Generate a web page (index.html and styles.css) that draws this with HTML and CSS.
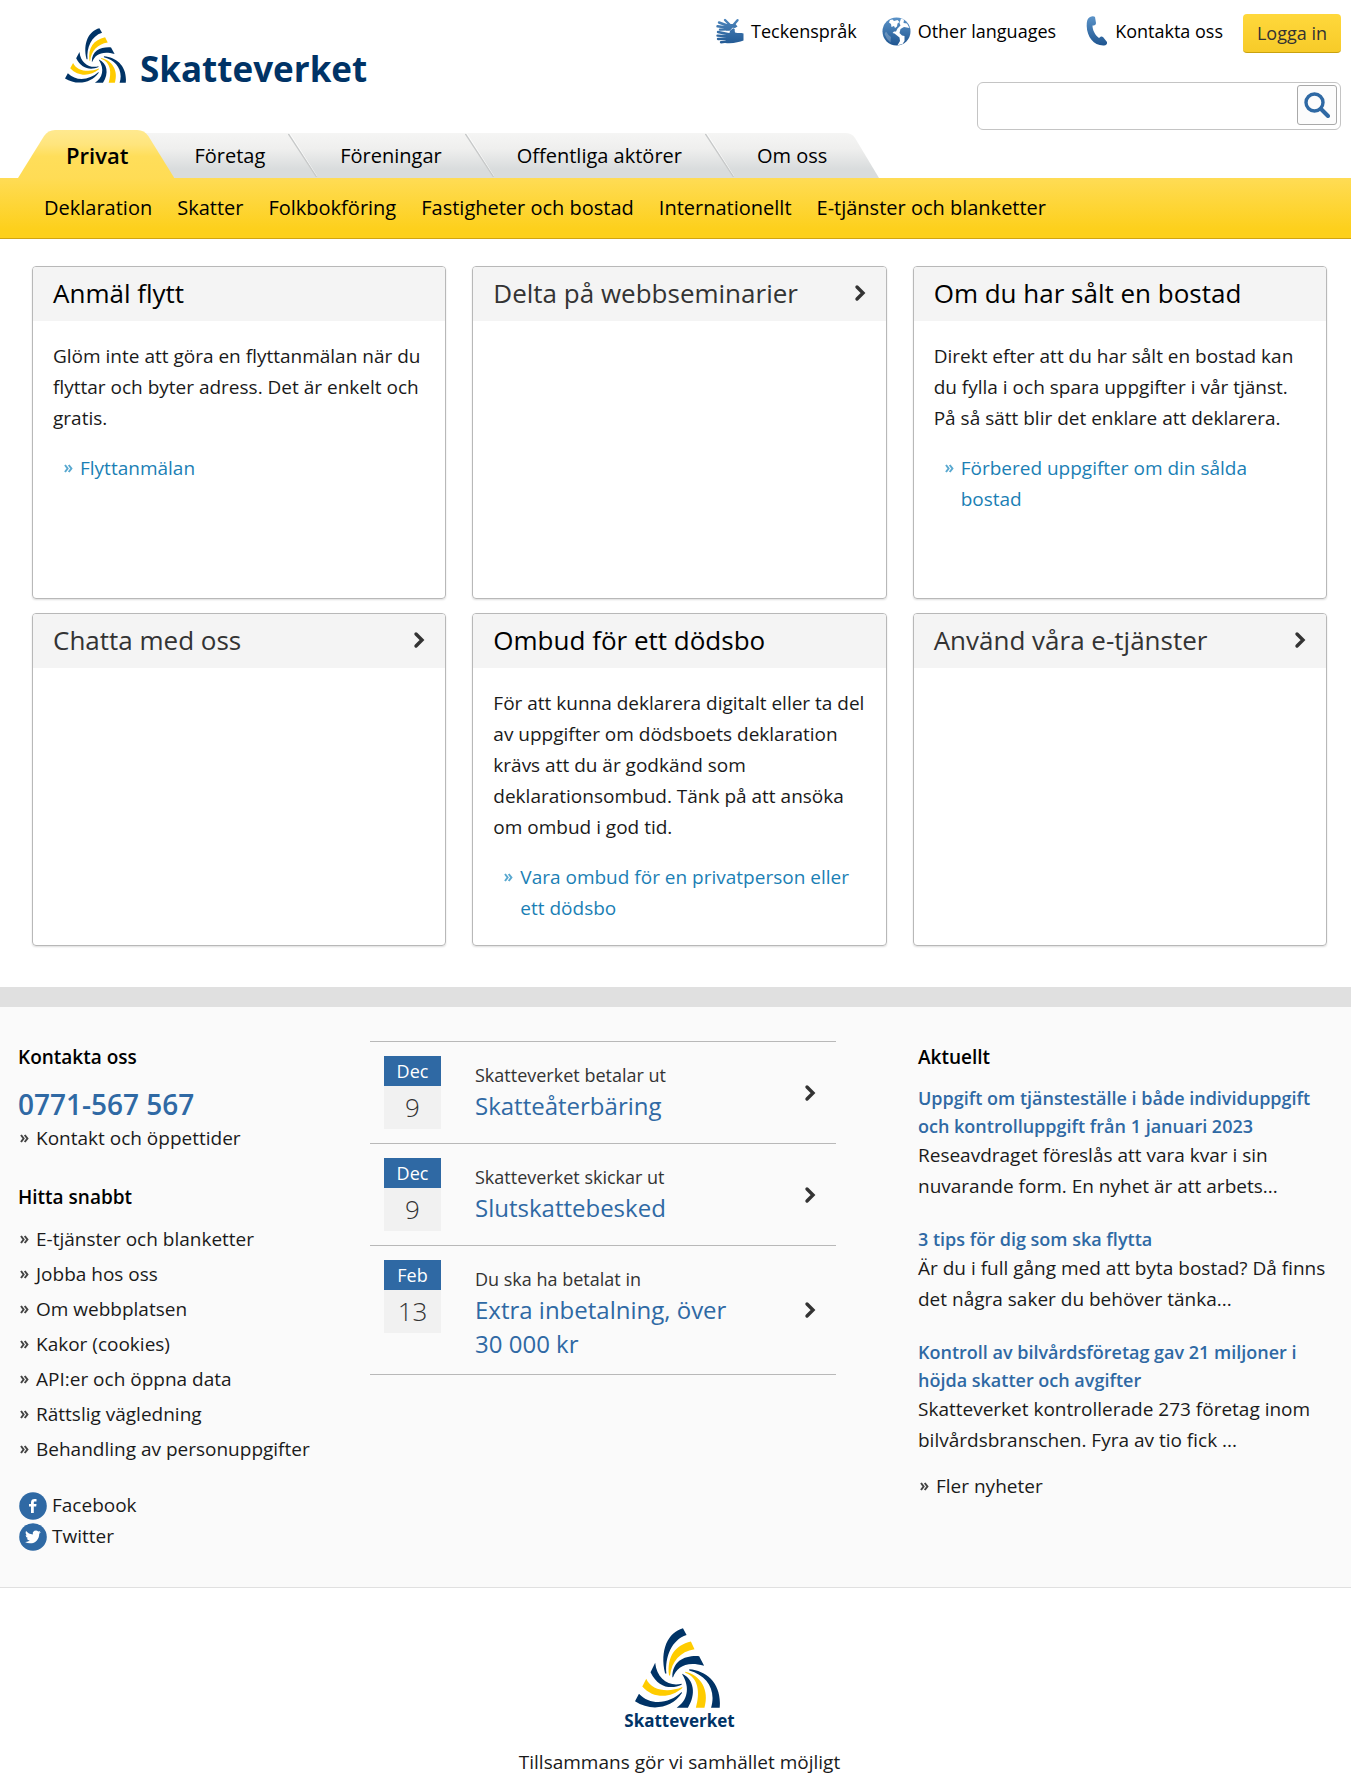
FILE: index.html
```html
<!DOCTYPE html>
<html lang="sv">
<head>
<meta charset="utf-8">
<meta name="viewport" content="width=device-width, initial-scale=1">
<title>Skatteverket – Privat</title>
<link rel="stylesheet" href="styles.css">
</head>
<body>
<svg class="defs" width="0" height="0" aria-hidden="true">
  <defs>
    <linearGradient id="blue" x1="0" y1="0" x2="0" y2="1"><stop offset="0" stop-color="#5b93c8"/><stop offset="1" stop-color="#1f5590"/></linearGradient>
    <linearGradient id="handBlue" gradientUnits="userSpaceOnUse" x1="0" y1="0" x2="0" y2="26"><stop offset="0" stop-color="#4d86bd"/><stop offset="1" stop-color="#235a94"/></linearGradient>
    <linearGradient id="tabYellow" x1="0" y1="0" x2="0" y2="1"><stop offset="0" stop-color="#ffe98f"/><stop offset=".3" stop-color="#ffe57d"/><stop offset=".55" stop-color="#ffde5a"/><stop offset="1" stop-color="#ffdc55"/></linearGradient>
    <linearGradient id="tabGray" x1="0" y1="0" x2="0" y2="1"><stop offset="0" stop-color="#f5f5f4"/><stop offset=".35" stop-color="#efefee"/><stop offset=".8" stop-color="#d9dcdd"/><stop offset="1" stop-color="#d9dcdd"/></linearGradient>
    <symbol id="swirl" viewBox="404 113 257 241" preserveAspectRatio="none">
      <g fill="#003366">
        <path d="M549 114C504 126 478 180 495 250L499 250C494 200 515 148 560 134Z"/>
        <path d="M598 198C555 195 517 212 517 261L519 261C530 230 560 211 613 227Z"/>
        <path d="M568 237C622 241 667 282 660 353L634 353C650 300 622 256 568 241Z"/>
        <path d="M547 251C582 268 590 312 564 353L530 353C562 332 572 294 547 253Z"/>
        <path d="M465 218L451 246C473 292 512 299 545 284L545 281C508 291 470 268 465 218Z"/>
        <path d="M416 311L404 334C452 365 515 356 546 309L545 306C508 341 452 349 416 311Z"/>
      </g>
      <g fill="#ffcc00">
        <path d="M573 154C525 165 500 200 507 256L510 256C515 214 540 184 584 177Z"/>
        <path d="M556 245C602 255 630 300 614 353L588 353C601 310 597 262 556 248Z"/>
        <path d="M438 266L426 289C460 327 512 325 547 294L547 291C505 309 453 302 438 266Z"/>
      </g>
    </symbol>
    <symbol id="chevron" viewBox="0 0 12 18"><path d="M3 3L9 9L3 15" fill="none" stroke="#333" stroke-width="3.400" stroke-linecap="round"/></symbol>
    <symbol id="divider" viewBox="0 0 29 45"><path d="M1.5 0L30 45" stroke="#fff" stroke-opacity=".7" stroke-width="1"/><path d="M.5 1L28.5 44" stroke="#c6c8c8" stroke-width="1.3"/></symbol>
    <symbol id="raquo" viewBox="0 0 9 9"><path d="M1 1L3.600 4.500L1 8M4.700 1L7.400 4.500L4.700 8" fill="none" stroke="currentColor" stroke-width="2"/></symbol>
  </defs>
</svg>

<header class="header">
  <div class="masthead">
    <a class="logo" href="#"><svg class="logo-mark" aria-hidden="true"><use href="#swirl"/></svg><span class="logo-name">Skatteverket</span></a>
    <div class="tools">
      <nav class="quick" aria-label="Verktyg">
        <a class="quick-link" href="#"><svg width="28" height="26" viewBox="0 0 28 26" aria-hidden="true">
          <g fill="none" stroke="url(#handBlue)" stroke-width="2.400" stroke-linecap="round" stroke-linejoin="round"><path d="M15 8L9 2M14 8.500L3 4.500M14 10L1.500 8.300M13 11.300L4 11.600M16.500 8L21.500 2.200M15 13.500L17.500 11.500"/><path d="M14 16.500L2 14M14 18.500L1.500 17.600M14 20.500L2 21M14 23L5 24.200"/></g>
          <path d="M11 6L19.500 6L21.500 8.500L19 10L16.500 9.800L14 12.500H10Z" fill="url(#handBlue)"/>
          <path d="M12 15.500L17 12.500L18.500 11.500L19 14.500C22 15.500 25 14.500 27.500 15.500V22.500C23 24 17 26 9 25L11 18Z" fill="url(#handBlue)"/></svg><span>Teckenspråk</span></a>
        <a class="quick-link" href="#"><svg width="29" height="29" viewBox="0 0 29 29" aria-hidden="true"><circle cx="14.500" cy="14.500" r="14" fill="url(#blue)"/><path d="M8 3L10.500 2.500L12 4L15.500 3L17.500 5L15.500 6.500L15 9.500L13 11L12 9L9.500 10L9 7L7 5.500Z" fill="#fff"/><path d="M19 1.500L22 2.800L21.500 6L25 6.500L27.500 11L22 10L18.500 12L17.500 16L20 18.500L22.500 19L22.500 24L20.500 27L15.500 28.300L18 24L17.500 20.500L12.500 16.500L10.500 16L12 14.500L14 14.500L15.500 11.500L18.500 8.500L17.500 6Z" fill="#fff"/><path d="M4 14.500L6.500 18L9 20L8.500 25.500L5 22L2.500 17Z" fill="#fff" fill-opacity=".25"/></svg><span>Other languages</span></a>
        <a class="quick-link quick-phone" href="#"><svg width="22" height="30" viewBox="0 0 22 30" aria-hidden="true"><path d="M4 1C6 0 8 0 9 1L10 7C10 9 8.500 9.500 6.500 9.500C6.500 14 9 19 13 22C14.500 20.500 15.500 20 17 21L21 26C21.500 28 20 29.500 18 29.500C8 30 1 21 .7 10C.6 5 1.500 2 4 1Z" fill="url(#blue)"/></svg><span>Kontakta oss</span></a>
        <button class="login" type="button">Logga in</button>
      </nav>
      <form class="search" role="search">
        <input class="search-input" type="search" aria-label="Sök">
        <button class="search-button" type="button" aria-label="Sök"><svg width="26" height="26" viewBox="0 0 26 26" fill="none" stroke="#2f69a4" aria-hidden="true"><circle cx="10.500" cy="10.500" r="8.500" stroke-width="3.400"/><path d="M17 17L24 24" stroke-width="4" stroke-linecap="round"/></svg></button>
      </form>
    </div>
  </div>
  <nav aria-label="Huvudmeny">
    <ul class="tabs">
      <li class="tab tab-active"><svg class="tab-shape" viewBox="0 0 156 48" preserveAspectRatio="none" aria-hidden="true"><path d="M0 48L26 6Q30 0 37 0H119Q126 0 130 6L156 48Z" fill="url(#tabYellow)"/></svg><a href="#">Privat</a></li>
      <li class="tab tab-first"><a href="#">Företag</a></li>
      <li class="tab-edge"><svg width="29" height="45" aria-hidden="true"><use href="#divider"/></svg></li>
      <li class="tab"><a href="#">Föreningar</a></li>
      <li class="tab-edge"><svg width="29" height="45" aria-hidden="true"><use href="#divider"/></svg></li>
      <li class="tab"><a href="#">Offentliga aktörer</a></li>
      <li class="tab-edge"><svg width="29" height="45" aria-hidden="true"><use href="#divider"/></svg></li>
      <li class="tab tab-last"><a href="#">Om oss</a></li>
      <li class="tab-end"><svg width="34" height="45" viewBox="0 0 34 45" aria-hidden="true"><path d="M0 0Q7 0 10 5L34 45H0Z" fill="url(#tabGray)"/></svg></li>
    </ul>
    <ul class="subnav">
      <li><a href="#">Deklaration</a></li>
      <li><a href="#">Skatter</a></li>
      <li><a href="#">Folkbokföring</a></li>
      <li><a href="#">Fastigheter och bostad</a></li>
      <li><a href="#">Internationellt</a></li>
      <li><a href="#">E-tjänster och blanketter</a></li>
    </ul>
  </nav>
</header>

<main class="cards">
  <section class="card">
    <h2 class="card-title">Anmäl flytt</h2>
    <div class="card-body">
      <p>Glöm inte att göra en flyttanmälan när du flyttar och byter adress. Det är enkelt och gratis.</p>
      <a class="card-link" href="#"><svg class="raquo" aria-hidden="true"><use href="#raquo"/></svg><span>Flyttanmälan</span></a>
    </div>
  </section>
  <section class="card">
    <h2 class="card-title"><a class="card-head-link" href="#">Delta på webbseminarier <svg class="chevron" aria-hidden="true"><use href="#chevron"/></svg></a></h2>
  </section>
  <section class="card">
    <h2 class="card-title">Om du har sålt en bostad</h2>
    <div class="card-body">
      <p>Direkt efter att du har sålt en bostad kan du fylla i och spara uppgifter i vår tjänst. På så sätt blir det enklare att deklarera.</p>
      <a class="card-link" href="#"><svg class="raquo" aria-hidden="true"><use href="#raquo"/></svg><span>Förbered uppgifter om din sålda bostad</span></a>
    </div>
  </section>
  <section class="card">
    <h2 class="card-title"><a class="card-head-link" href="#">Chatta med oss <svg class="chevron" aria-hidden="true"><use href="#chevron"/></svg></a></h2>
  </section>
  <section class="card">
    <h2 class="card-title">Ombud för ett dödsbo</h2>
    <div class="card-body">
      <p>För att kunna deklarera digitalt eller ta del av uppgifter om dödsboets deklaration krävs att du är godkänd som deklarationsombud. Tänk på att ansöka om ombud i god tid.</p>
      <a class="card-link" href="#"><svg class="raquo" aria-hidden="true"><use href="#raquo"/></svg><span>Vara ombud för en privatperson eller ett dödsbo</span></a>
    </div>
  </section>
  <section class="card">
    <h2 class="card-title"><a class="card-head-link" href="#">Använd våra e-tjänster <svg class="chevron" aria-hidden="true"><use href="#chevron"/></svg></a></h2>
  </section>
</main>

<footer>
  <div class="info">
    <div class="info-left">
      <h2 class="info-title">Kontakta oss</h2>
      <a class="phone" href="#">0771-567 567</a>
      <a class="arrow-link" href="#"><svg class="raquo" aria-hidden="true"><use href="#raquo"/></svg>Kontakt och öppettider</a>
      <h2 class="info-title info-title-next">Hitta snabbt</h2>
      <ul class="links">
        <li><a class="arrow-link" href="#"><svg class="raquo" aria-hidden="true"><use href="#raquo"/></svg>E-tjänster och blanketter</a></li>
        <li><a class="arrow-link" href="#"><svg class="raquo" aria-hidden="true"><use href="#raquo"/></svg>Jobba hos oss</a></li>
        <li><a class="arrow-link" href="#"><svg class="raquo" aria-hidden="true"><use href="#raquo"/></svg>Om webbplatsen</a></li>
        <li><a class="arrow-link" href="#"><svg class="raquo" aria-hidden="true"><use href="#raquo"/></svg>Kakor (cookies)</a></li>
        <li><a class="arrow-link" href="#"><svg class="raquo" aria-hidden="true"><use href="#raquo"/></svg>API:er och öppna data</a></li>
        <li><a class="arrow-link" href="#"><svg class="raquo" aria-hidden="true"><use href="#raquo"/></svg>Rättslig vägledning</a></li>
        <li><a class="arrow-link" href="#"><svg class="raquo" aria-hidden="true"><use href="#raquo"/></svg>Behandling av personuppgifter</a></li>
      </ul>
      <ul class="social">
        <li><a href="#"><svg width="28" height="28" viewBox="0 0 28 28" aria-hidden="true"><circle cx="14" cy="14" r="13.800" fill="#2f69a4"/><path d="M12 21V14.500H10V12H12V10.500C12 8 13.300 7 15.500 7H17.500V9.500H16C15 9.500 14.800 10 14.800 10.800V12H17.500L17.200 14.500H14.800V21Z" fill="#fff"/></svg>Facebook</a></li>
        <li><a href="#"><svg width="28" height="28" viewBox="0 0 28 28" aria-hidden="true"><circle cx="14" cy="14" r="13.800" fill="#2f69a4"/><g transform="translate(6 6) scale(.66)"><path d="M23.950 4.570a10 10 0 0 1-2.820.770 4.960 4.960 0 0 0 2.160-2.720c-.950.550-2 .950-3.130 1.180a4.920 4.920 0 0 0-8.380 4.480C7.690 8.090 4.070 6.130 1.640 3.160a4.820 4.820 0 0 0-.670 2.480c0 1.710.870 3.210 2.190 4.100a4.900 4.900 0 0 1-2.230-.620v.060a4.920 4.920 0 0 0 3.950 4.830 5 5 0 0 1-2.210.080 4.940 4.940 0 0 0 4.600 3.420A9.870 9.870 0 0 1 0 19.540a13.990 13.990 0 0 0 7.550 2.210c9.050 0 13.990-7.500 13.990-13.980 0-.210 0-.420-.010-.630a9.940 9.940 0 0 0 2.420-2.570z" fill="#fff"/></g></svg>Twitter</a></li>
      </ul>
    </div>

    <ul class="dates">
      <li><a class="date-item" href="#">
        <span class="date"><span class="month">Dec</span><span class="day">9</span></span>
        <span class="date-text"><span class="date-intro">Skatteverket betalar ut</span><span class="date-name">Skatteåterbäring</span></span>
        <svg class="chevron" aria-hidden="true"><use href="#chevron"/></svg>
      </a></li>
      <li><a class="date-item" href="#">
        <span class="date"><span class="month">Dec</span><span class="day">9</span></span>
        <span class="date-text"><span class="date-intro">Skatteverket skickar ut</span><span class="date-name">Slutskattebesked</span></span>
        <svg class="chevron" aria-hidden="true"><use href="#chevron"/></svg>
      </a></li>
      <li><a class="date-item" href="#">
        <span class="date"><span class="month">Feb</span><span class="day">13</span></span>
        <span class="date-text"><span class="date-intro">Du ska ha betalat in</span><span class="date-name">Extra inbetalning, över 30&nbsp;000&nbsp;kr</span></span>
        <svg class="chevron" aria-hidden="true"><use href="#chevron"/></svg>
      </a></li>
    </ul>

    <div class="news">
      <h2 class="info-title">Aktuellt</h2>
      <article class="news-item"><h3><a href="#">Uppgift om tjänsteställe i både individuppgift och kontrolluppgift från 1 januari 2023</a></h3><p>Reseavdraget föreslås att vara kvar i sin nuvarande form. En nyhet är att arbets...</p></article>
      <article class="news-item"><h3><a href="#">3 tips för dig som ska flytta</a></h3><p>Är du i full gång med att byta bostad? Då finns det några saker du behöver tänka...</p></article>
      <article class="news-item"><h3><a href="#">Kontroll av bilvårdsföretag gav 21 miljoner i höjda skatter och avgifter</a></h3><p>Skatteverket kontrollerade 273 företag inom bilvårdsbranschen. Fyra av tio fick ...</p></article>
      <a class="arrow-link" href="#"><svg class="raquo" aria-hidden="true"><use href="#raquo"/></svg>Fler nyheter</a>
    </div>
  </div>
  <div class="closing">
    <svg class="closing-mark" aria-hidden="true"><use href="#swirl"/></svg>
    <span class="closing-name">Skatteverket</span>
    <p class="tagline">Tillsammans gör vi samhället möjligt</p>
  </div>
</footer>
</body>
</html>
```
FILE: styles.css
```css
* { box-sizing: border-box; }
body {
  margin: 0;
  background: #fff;
  color: #1a1a1a;
  font: 19px/31px "Open Sans", "Noto Sans", sans-serif;
}
h2, h3, p, ul { margin: 0; padding: 0; font-weight: 400; }
ul { list-style: none; }
a { color: inherit; text-decoration: none; }
svg { display: block; flex: none; }
button { font: inherit; cursor: pointer; }
.defs { position: absolute; }

/* Header */
.masthead {
  display: flex;
  justify-content: space-between;
  align-items: flex-start;
  padding: 14px 10px 0 65px;
}
.logo { display: flex; align-items: flex-end; gap: 14px; padding-top: 14px; color: #003366; }
.logo-mark { width: 61px; height: 55px; }
.logo-name { font-size: 35px; line-height: 28px; font-weight: 700; }
.tools { display: flex; flex-direction: column; align-items: flex-end; gap: 29px; }
.quick { display: flex; align-items: flex-start; color: #000; font-size: 18px; }
.quick-link { display: flex; align-items: center; gap: 7px; height: 34px; margin-right: 25px; }
.quick-phone { margin: 0 20px 0 5px; }
.login {
  height: 39px;
  padding: 0 14px;
  border: 0;
  border-bottom: 1px solid #c9a20e;
  border-radius: 4px;
  background: linear-gradient(#ffd83c, #f7cb29);
  color: #333;
}
.search {
  display: flex;
  width: 364px;
  height: 48px;
  padding: 2px 3px;
  border: 1px solid #c4c4c4;
  border-radius: 6px;
}
.search-input { flex: 1; min-width: 0; border: 0; outline: 0; background: none; font: inherit; }
.search-button {
  display: flex;
  align-items: center;
  justify-content: center;
  width: 40px;
  height: 40px;
  padding: 0;
  border: 1px solid #a9a9a9;
  border-radius: 3px;
  background: #fcfcfc;
}

.tabs { display: flex; align-items: flex-end; padding-left: 18px; font-size: 20px; color: #000; }
.tab, .tab-edge {
  height: 45px;
  background: linear-gradient(#f5f5f4, #efefee 35%, #d9dcdd 80%, #d9dcdd);
}
.tab { padding: 0 23px; line-height: 45px; }
.tab-active {
  position: relative;
  z-index: 1;
  height: 48px;
  margin-right: -29px;
  padding: 0 46px 0 48px;
  background: none;
  font-size: 22px;
  font-weight: 600;
  line-height: 51px;
}
.tab-active a { position: relative; }
.tab-shape { position: absolute; inset: 0; width: 100%; height: 100%; }
.tab-first { padding-left: 49px; }
.tab-last { padding-right: 18px; }
.subnav {
  display: flex;
  gap: 25px;
  height: 61px;
  padding-left: 44px;
  border-bottom: 1px solid #d0a413;
  background: linear-gradient(#ffdc55, #fdd01c 85%);
  color: #000;
  font-size: 20px;
  line-height: 59px;
}

/* Cards */
.cards {
  display: grid;
  grid-template-columns: repeat(3, 1fr);
  grid-auto-rows: 1fr;
  gap: 14px 26px;
  padding: 27px 24px 41px 32px;
}
.card {
  border: 1px solid #b8b8b8;
  border-radius: 4px;
  box-shadow: 0 1px 2px #ddd;
  overflow: hidden;
}
.card-title {
  padding: 0 20px 2px;
  background: #f4f4f4;
  color: #000;
  font-size: 26px;
  line-height: 52px;
}
.card-head-link { display: flex; align-items: center; justify-content: space-between; color: #333; }
.chevron { width: 12px; height: 18px; }
.card-body { padding: 20px 20px 21px; }
.card-link { display: flex; margin-top: 19px; padding-left: 11px; gap: 7px; color: #1b7fb5; }
.raquo { width: 9px; height: 9px; color: #444; }
.card-link .raquo { margin-top: 11px; color: #5aa9d0; }

/* Footer */
.info {
  display: grid;
  grid-template-columns: 352fr 466fr 497fr;
  padding: 34px 18px 35px;
  border-top: 20px solid #e0e0e0;
  border-bottom: 1px solid #e0e0e0;
  background: #fafafa;
}
.info-title { color: #000; font-size: 19px; font-weight: 600; line-height: 32px; }
.phone { display: block; margin-top: 12px; color: #2f69a4; font-size: 28px; font-weight: 600; line-height: 38px; }
.arrow-link { display: flex; align-items: center; gap: 7px; padding-left: 2px; line-height: 31px; }
.info-title-next { margin: 27px 0 9px; }
.links .arrow-link { line-height: 35px; }
.social { margin-top: 23px; }
.social a { display: flex; align-items: center; gap: 5px; line-height: 31px; padding-left: 1px; }

.dates { border-top: 1px solid #b8b8b8; align-self: start; }
.dates li { border-bottom: 1px solid #b8b8b8; }
.date-item { display: flex; align-items: center; padding: 0 20px 0 14px; }
.date { display: flex; flex-direction: column; align-self: flex-start; width: 57px; margin: 14px 34px 14px 0; text-align: center; }
.month { background: #2f69a4; color: #fff; font-size: 18px; line-height: 30px; }
.day { background: #f1f1f1; color: #333; font-size: 26px; font-weight: 300; line-height: 43px; }
.date-text { display: flex; flex: 1; flex-direction: column; align-self: flex-start; padding: 19px 40px 13px 0; }
.date-intro { color: #333; font-size: 18px; line-height: 28px; }
.date-name { color: #2f69a4; font-size: 24px; line-height: 34px; }

.news { padding-left: 82px; }
.news .info-title { margin-bottom: 11px; }
.news-item { margin-bottom: 23px; }
.news-item h3 { color: #2f69a4; font-size: 18px; font-weight: 600; line-height: 28px; }
.news .arrow-link { margin-top: -8px; }

.closing { display: flex; flex-direction: column; align-items: center; padding: 40px 0 8px 8px; }
.closing-mark { width: 85px; height: 80px; margin-right: 4px; }
.closing-name { color: #003366; font-size: 17px; font-weight: 700; line-height: 26px; }
.tagline { margin-top: 13px; }
```
